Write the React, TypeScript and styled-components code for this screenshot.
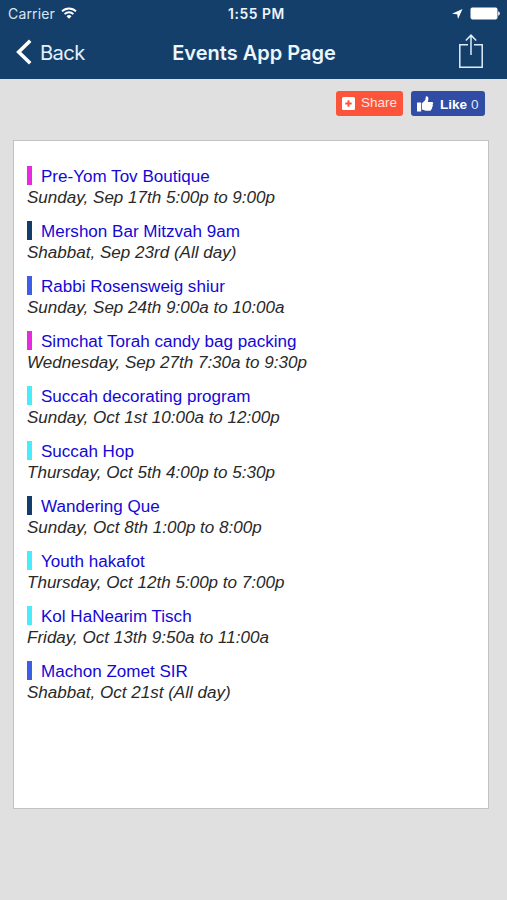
import React from "react";
import styled, { createGlobalStyle } from "styled-components";

const GlobalStyle = createGlobalStyle`
  * { box-sizing: border-box; }
  body { margin: 0; background: #e0e0e0; }
`;

const Screen = styled.div`
  width: 507px;
  height: 900px;
  display: flex;
  flex-direction: column;
  background: #e0e0e0;
  overflow: hidden;
`;

const Header = styled.header`
  height: 79px;
  flex: none;
  background: #143f6b;
  color: #fff;
  font-family: Inter, sans-serif;
`;

const StatusBar = styled.div`
  height: 27px;
  display: grid;
  grid-template-columns: 1fr auto 1fr;
  align-items: center;
  padding: 0 7px 0 8px;
  white-space: nowrap;
`;

const Carrier = styled.div`
  display: flex;
  align-items: center;
  gap: 6px;
  font-size: 14px;
  letter-spacing: 0.15px;
  color: #d9e6f3;
  svg { display: block; margin-top: -2px; }
`;

const Clock = styled.div`
  padding-left: 5px;
  font-size: 13.8px;
  font-weight: 600;
  letter-spacing: 0.6px;
  color: #edf5fc;
`;

const StatusIcons = styled.div`
  display: flex;
  justify-content: flex-end;
  align-items: center;
  gap: 7px;
  svg { display: block; }
`;

const NavBar = styled.div`
  height: 50px;
  display: grid;
  grid-template-columns: 1fr auto 1fr;
  align-items: center;
  padding: 0 23px 0 16px;
  white-space: nowrap;
`;

const BackButton = styled.div`
  display: flex;
  align-items: center;
  gap: 8px;
  font-size: 20.2px;
  letter-spacing: -0.6px;
  color: #e4f0fa;
`;

const Title = styled.h1`
  margin: 0;
  padding: 1px 0 0 8px;
  font-size: 20px;
  font-weight: 600;
  line-height: 26px;
  color: #edf6fd;
`;

const ShareIcon = styled.svg`
  justify-self: end;
  display: block;
  margin-bottom: 2px;
`;

const SocialBar = styled.div`
  display: flex;
  flex: none;
  justify-content: flex-end;
  gap: 8px;
  height: 61px;
  padding: 12px 22px 0 0;
`;

const SocialButton = styled.div<{ $color: string; $width: number }>`
  width: ${(p) => p.$width}px;
  height: 25px;
  display: flex;
  align-items: center;
  border-radius: 3px;
  background: ${(p) => p.$color};
  color: #fff;
  padding-left: 6px;
  font-family: "Liberation Sans", Arial, sans-serif;
  font-size: 13.5px;
  white-space: nowrap;
  svg { flex: none; }
`;

const ShareLabel = styled.span`
  margin: -2px 0 0 6px;
  color: #ffe3dc;
`;

const LikeLabel = styled.span`
  margin: 1px 0 0 6px;
  color: #dfe7f8;
  b { color: #fff; margin-right: 4px; }
`;

const Panel = styled.main`
  width: 476px;
  height: 669px;
  flex: none;
  margin-left: 13px;
  padding: 24px 13px;
  background: #fff;
  border: 1px solid #c2c2c2;
  font-family: "Liberation Sans", Arial, sans-serif;
`;

const Event = styled.article`
  height: 55px;
  font-size: 17.06px;
  line-height: 21px;
  white-space: nowrap;
`;

const EventName = styled.div`
  display: flex;
  align-items: center;
  gap: 9px;
  height: 21px;
  color: #1408d6;
  span { padding-top: 1px; }
`;

const Marker = styled.i<{ $color: string }>`
  width: 5px;
  height: 19px;
  background: ${(p) => p.$color};
`;

const EventDate = styled.div`
  padding-top: 1px;
  font-style: italic;
  color: #292929;
`;

const PINK = "#e52ae0";
const NAVY = "#123c69";
const BLUE = "#3d5fe8";
const CYAN = "#49ecfa";

const events = [
  { name: "Pre-Yom Tov Boutique", date: "Sunday, Sep 17th 5:00p to 9:00p", color: PINK },
  { name: "Mershon Bar Mitzvah 9am", date: "Shabbat, Sep 23rd (All day)", color: NAVY },
  { name: "Rabbi Rosensweig shiur", date: "Sunday, Sep 24th 9:00a to 10:00a", color: BLUE },
  { name: "Simchat Torah candy bag packing", date: "Wednesday, Sep 27th 7:30a to 9:30p", color: PINK },
  { name: "Succah decorating program", date: "Sunday, Oct 1st 10:00a to 12:00p", color: CYAN },
  { name: "Succah Hop", date: "Thursday, Oct 5th 4:00p to 5:30p", color: CYAN },
  { name: "Wandering Que", date: "Sunday, Oct 8th 1:00p to 8:00p", color: NAVY },
  { name: "Youth hakafot", date: "Thursday, Oct 12th 5:00p to 7:00p", color: CYAN },
  { name: "Kol HaNearim Tisch", date: "Friday, Oct 13th 9:50a to 11:00a", color: CYAN },
  { name: "Machon Zomet SIR", date: "Shabbat, Oct 21st (All day)", color: BLUE },
];

export default function App() {
  return (
    <>
      <GlobalStyle />
      <Screen>
        <Header>
          <StatusBar>
            <Carrier>
              <span>Carrier</span>
              <svg width="16" height="12" viewBox="0 0 16 12" fill="none" stroke="#fff" strokeWidth="1.9">
                <path d="M1 4.4a10 10 0 0 1 14 0" />
                <path d="M3.6 7.1a6.3 6.3 0 0 1 8.8 0" />
                <path d="M8 11.7 5.5 9.2a3.6 3.6 0 0 1 5 0z" fill="#fff" stroke="none" />
              </svg>
            </Carrier>
            <Clock>1:55 PM</Clock>
            <StatusIcons>
              <svg width="11" height="10" viewBox="0 0 11 10">
                <path d="M10.5 0 6 10 5.2 5.3 0 4.7z" fill="#fff" />
              </svg>
              <svg width="30" height="13" viewBox="0 0 30 13" fill="#fff">
                <rect x="0.5" y="0.6" width="27" height="11.8" rx="1.8" />
                <path d="M28.2 4.2q1.6.6 1.6 2.3t-1.6 2.3z" />
              </svg>
            </StatusIcons>
          </StatusBar>
          <NavBar>
            <BackButton>
              <svg width="16" height="26" viewBox="0 0 16 26" fill="none" stroke="#fff" strokeWidth="3.6">
                <path d="M14.2 1.8 2.7 13l11.5 11.2" />
              </svg>
              <span>Back</span>
            </BackButton>
            <Title>Events App Page</Title>
            <ShareIcon width="26" height="36" viewBox="0 0 26 36" fill="none" stroke="#dcecf8" strokeWidth="1.5">
              <path d="M10 11.8H1.8v22.4h22.4V11.8H16M13 22V2.2M7.8 7.6 13 2.2l5.2 5.4" />
            </ShareIcon>
          </NavBar>
        </Header>
        <SocialBar>
          <SocialButton $color="#fb543b" $width={67}>
            <svg width="13" height="13" viewBox="0 0 13 13">
              <rect width="13" height="13" rx="1.5" fill="#fff" />
              <path d="M6.5 3.3v6.4M3.3 6.5h6.4" stroke="#fb543b" strokeWidth="1.9" />
            </svg>
            <ShareLabel>Share</ShareLabel>
          </SocialButton>
          <SocialButton $color="#304ca4" $width={74}>
            <svg width="17" height="16" viewBox="0 0 17 16" fill="#fff">
              <path d="M0 6.5h4.2v9H0zM5 7.3 8.3 4 8.8.8Q9 .1 9.9.2q1.5.2 1.5 2.2 0 1.6-.7 3.5h4q1.5 0 1.5 1.4 0 .9-.7 1.3.6.6.3 1.4-.2.8-.8 1 .4.7.1 1.4-.2.6-.8.8.1 1.5-1.5 1.5H9q-1.2 0-2.2-.6L5 13.5z" />
            </svg>
            <LikeLabel><b>Like</b>0</LikeLabel>
          </SocialButton>
        </SocialBar>
        <Panel>
          {events.map((event) => (
            <Event key={event.name}>
              <EventName>
                <Marker $color={event.color} />
                <span>{event.name}</span>
              </EventName>
              <EventDate>{event.date}</EventDate>
            </Event>
          ))}
        </Panel>
      </Screen>
    </>
  );
}
